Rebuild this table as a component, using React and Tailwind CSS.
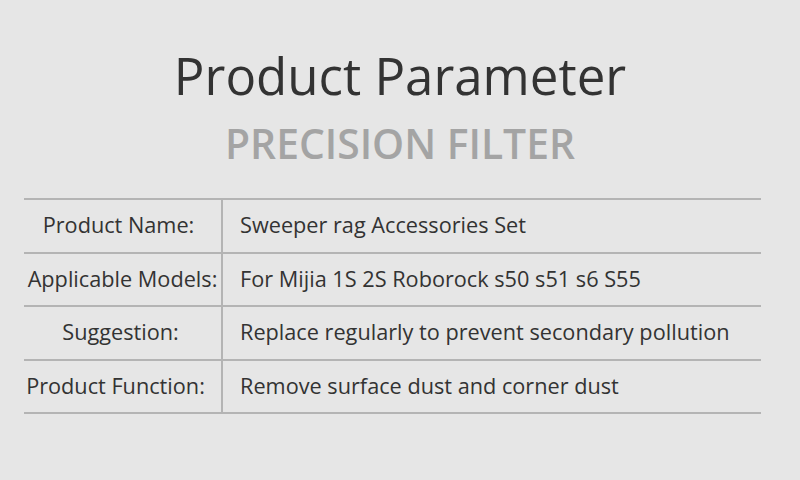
export default function App() {
  const rows = [
    ["Product Name:", "Sweeper rag Accessories Set", "mr-[8px]"],
    ["Applicable Models:", "For Mijia 1S 2S Roborock s50 s51 s6 S55", "mr-0"],
    ["Suggestion:", "Replace regularly to prevent secondary pollution", "mr-[4px]"],
    ["Product Function:", "Remove surface dust and corner dust", "mr-[14px]"],
  ];
  return (
    <div
      className="w-[800px] h-[480px] bg-[#e6e6e6] flex flex-col items-center overflow-hidden"
      style={{ fontFamily: '"Open Sans", "Noto Sans", sans-serif' }}
    >
      <div className="mt-[41px] text-[51px] leading-[68px] text-[#333333]">Product Parameter</div>
      <div className="mt-[6px] text-[40.8px] leading-[56px] font-semibold text-[#a4a4a4]">PRECISION FILTER</div>
      <div className="mt-[27px] w-[737px] border-t-2 border-[#b4b4b4] self-start ml-[24px]">
        {rows.map(([k, v, m], i) => (
          <div key={i} className="flex h-[53.5px] border-b-2 border-[#b4b4b4]">
            <div className="w-[199px] flex items-center justify-center border-r-2 border-[#b4b4b4] text-[21.7px] text-[#333333] whitespace-nowrap">
              <span className={m}>{k}</span>
            </div>
            <div className="flex-1 flex items-center pl-[17px] text-[21.7px] text-[#333333] whitespace-nowrap">
              {v}
            </div>
          </div>
        ))}
      </div>
    </div>
  );
}
